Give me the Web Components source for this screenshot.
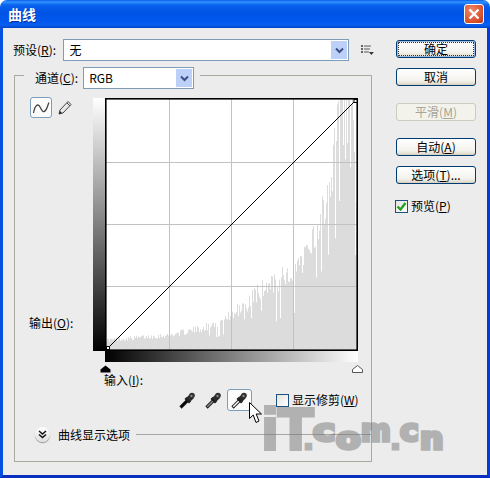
<!DOCTYPE html>
<html lang="zh">
<head>
<meta charset="utf-8">
<title>曲线</title>
<style>
    html, body { margin: 0; padding: 0; background: #fff; }
    body { font: 12px/16px "Noto Sans CJK SC", "Liberation Sans", sans-serif; color: #000; }
</style>
</head>
<body>
<curves-dialog></curves-dialog>
<script>
const FONT = '"Noto Sans CJK SC", "Liberation Sans", sans-serif';

class XpButton extends HTMLElement {
    constructor() {
        super();
        const shadow = this.attachShadow({ mode: 'open' });
        shadow.innerHTML = `
            <style>
                :host {
                    display: block;
                    box-sizing: border-box;
                    width: 80px;
                    height: 18px;
                    border: 1px solid #003c74;
                    border-radius: 3px;
                    background: linear-gradient(#fff, #f4f3ee 70%, #dcd8c8);
                    box-shadow: inset 0 -1px 0 #d6d2c2;
                    font: 12px/16px ${FONT};
                    color: #000;
                    text-align: center;
                }
                :host([default]) {
                    box-shadow: inset 0 0 0 1px #9dbbe3;
                    outline: 1px dotted #333;
                    outline-offset: -3px;
                }
                :host([disabled]) {
                    border-color: #cdcbbd;
                    background: #f3f3ec;
                    box-shadow: none;
                    color: #a5a598;
                }
            </style>
            <slot></slot>
        `;
    }
}

class XpSelect extends HTMLElement {
    constructor() {
        super();
        const shadow = this.attachShadow({ mode: 'open' });
        shadow.innerHTML = `
            <style>
                :host {
                    display: flex;
                    box-sizing: border-box;
                    height: 22px;
                    border: 1px solid #7f9db9;
                    background: #fff;
                    align-items: center;
                    justify-content: space-between;
                    padding-left: 5px;
                    padding-right: 1px;
                    font: 12px/16px ${FONT};
                }
                .arrow {
                    width: 16px;
                    height: 18px;
                    background: #bcd0f8;
                    display: flex;
                    align-items: center;
                    justify-content: center;
                }
            </style>
            <slot></slot>
            <div class="arrow">
                <svg width="9" height="7" viewBox="0 0 9 7"><path d="M1 1.500l3.500 3.500L8 1.500" fill="none" stroke="#3a5088" stroke-width="2"/></svg>
            </div>
        `;
    }
}

class XpCheck extends HTMLElement {
    constructor() {
        super();
        const shadow = this.attachShadow({ mode: 'open' });
        const tick = this.hasAttribute('checked')
            ? '<svg width="11" height="11" viewBox="0 0 11 11"><path d="M1.500 5.500l3 3 5-6.500" fill="none" stroke="#21a121" stroke-width="2.400"/></svg>'
            : '';
        shadow.innerHTML = `
            <style>
                :host {
                    display: flex;
                    align-items: center;
                    gap: 3px;
                    font: 12px/16px ${FONT};
                }
                .box {
                    box-sizing: border-box;
                    width: 13px;
                    height: 13px;
                    border: 1px solid #1c5180;
                    background: linear-gradient(135deg, #e4e3dc, #fff);
                    display: flex;
                    align-items: center;
                    justify-content: center;
                }
            </style>
            <div class="box">${tick}</div>
            <span><slot></slot></span>
        `;
    }
}

class TitleBar extends HTMLElement {
    constructor() {
        super();
        const shadow = this.attachShadow({ mode: 'open' });
        shadow.innerHTML = `
            <style>
                :host {
                    display: flex;
                    box-sizing: border-box;
                    height: 28px;
                    padding: 0 6px 0 8px;
                    align-items: center;
                    justify-content: space-between;
                    border-radius: 7px 7px 0 0;
                    background: linear-gradient(#0a5fe6 0, #2f92ff 2px, #0a62ee 5px, #0054e6 12px, #0058ee 22px, #0a5ff0 25px, #0043c8 28px);
                    color: #fff;
                    font: bold 14px/18px ${FONT};
                    text-shadow: 1px 1px 0 #0a2e9c;
                }
                .close {
                    box-sizing: border-box;
                    width: 20px;
                    height: 20px;
                    border: 1px solid #fff;
                    border-radius: 3px;
                    background: radial-gradient(circle at 35% 30%, #ec8a6c, #d9522c 65%, #b8341a);
                    display: flex;
                    align-items: center;
                    justify-content: center;
                }
            </style>
            <slot></slot>
            <div class="close">
                <svg width="12" height="12" viewBox="0 0 12 12"><path d="M1.500 1.500l9 9M10.500 1.500l-9 9" stroke="#fff" stroke-width="2.400" fill="none"/></svg>
            </div>
        `;
    }
}

class CurvesGraph extends HTMLElement {
    constructor() {
        super();
        const shadow = this.attachShadow({ mode: 'open' });
        shadow.innerHTML = `
            <style>
                :host {
                    display: grid;
                    grid-template-columns: 12px 253px;
                    grid-template-rows: 253px 11px 10px;
                }
                .output { background: linear-gradient(#fff, #000); }
                .plot { display: block; width: 253px; height: 253px; }
                .input { grid-column: 2; background: linear-gradient(90deg, #000, #fff); }
                .thumbs {
                    grid-column: 2;
                    display: flex;
                    justify-content: space-between;
                    margin: 3px -5px 0;
                }
                svg { display: block; }
            </style>
            <div class="output"></div>
            <svg class="plot" viewBox="0 0 253 253">
                <rect width="253" height="253" fill="#fff"/>
                <path id="hist" fill="#dcdcdc"/>
                <path d="M64.500 0V253M126.500 0V253M188.500 0V253M0 64.500H253M0 126.500H253M0 188.500H253" stroke="#c2c2c2" fill="none"/>
                <path d="M2 251L251 2" stroke="#000" fill="none"/>
                <rect x="0.800" y="0.800" width="251.400" height="251.400" fill="none" stroke="#000" stroke-width="1.600"/>
                <rect x="249" y="1.500" width="3" height="3" fill="#fff" stroke="#000"/>
                <rect x="1.500" y="248.500" width="3" height="3" fill="#fff" stroke="#000"/>
            </svg>
            <div class="input"></div>
            <div class="thumbs">
                <svg width="11" height="8" viewBox="0 0 11 8"><path d="M5.500 0.500L10.500 4.500V7.500H0.500V4.500Z" fill="#000"/></svg>
                <svg width="11" height="8" viewBox="0 0 11 8"><path d="M5.500 0.500L10.500 4.500V7.500H0.500V4.500Z" fill="#fff" stroke="#555"/></svg>
            </div>
        `;
        shadow.getElementById('hist').setAttribute('d', this.histogram());
    }

    histogram() {
        const env = [[0, 12], [65, 18], [95, 25], [115, 33], [142, 53], [155, 70], [168, 73], [202, 103], [212, 132], [222, 167], [227, 200], [232, 253], [247, 253], [250, 195], [252, 150]];
        let seed = 17;
        const rnd = () => (seed = (seed * 16807) % 2147483647) / 2147483647;
        let d = '';
        for (let x = 0; x < 253; x++) {
            let i = 0;
            while (i < env.length - 2 && env[i + 1][0] < x) i++;
            const [x0, y0] = env[i];
            const [x1, y1] = env[i + 1];
            const top = y0 + (y1 - y0) * (x - x0) / (x1 - x0);
            let h = top * (0.74 + rnd() * 0.3);
            if (x > 100 && rnd() < 0.1) h *= 0.5 + rnd() * 0.2;
            if (x > 232 && rnd() < 0.35) h *= 1.3;
            d += `M${x} 253V${(253 - Math.min(h, 253)).toFixed(1)}H${x + 1}V253Z`;
        }
        return d;
    }
}

class EyeDropper extends HTMLElement {
    constructor() {
        super();
        const shadow = this.attachShadow({ mode: 'open' });
        const tip = this.getAttribute('tone') || '#000';
        shadow.innerHTML = `
            <style>
                :host {
                    display: flex;
                    box-sizing: border-box;
                    align-items: center;
                    justify-content: center;
                    width: 17px;
                    height: 22px;
                }
                :host([active]) {
                    width: 25px;
                    border: 1px solid #7b9ebd;
                    border-radius: 3px;
                    background: #fbfbfb;
                }
            </style>
            <svg width="17" height="17" viewBox="0 0 17 17">
                <path d="M1.500 15.500L8.500 8.500" stroke="#1a1a1a" stroke-width="3.200" fill="none"/>
                <path d="M2.200 14.800L8.500 8.500" stroke="${tip}" stroke-width="1.500" fill="none"/>
                <path d="M6.500 6L11 10.500" stroke="#1a1a1a" stroke-width="2.800" fill="none"/>
                <path d="M9 8L13 4" stroke="#2a2a2a" stroke-width="5.400" fill="none"/>
                <circle cx="13" cy="3.500" r="2.800" fill="#333"/>
                <circle cx="12.500" cy="4" r="1.100" fill="#999"/>
            </svg>
        `;
    }
}

class CurvesDialog extends HTMLElement {
    constructor() {
        super();
        const shadow = this.attachShadow({ mode: 'open' });
        shadow.innerHTML = `
            <style>
                :host {
                    display: block;
                    position: relative;
                    width: 490px;
                    height: 478px;
                    overflow: hidden;
                    font: 12px/16px ${FONT};
                    color: #000;
                }
                u { text-underline-offset: 1px; }
                .frame {
                    box-sizing: border-box;
                    height: 450px;
                    border: solid #0550e0;
                    border-width: 0 3px 3px;
                    border-bottom-color: #0a2fc0;
                    border-right-color: #0a3bd0;
                    background: #ececec;
                    display: flex;
                    padding-left: 11px;
                }
                .left { width: 358px; padding-top: 11px; }
                .right {
                    margin-left: 24px;
                    padding-top: 12px;
                    display: flex;
                    flex-direction: column;
                }
                .preset {
                    display: flex;
                    align-items: center;
                    margin-left: -1px;
                    margin-right: -2px;
                    height: 22px;
                    margin-bottom: 14px;
                }
                .preset .label { width: 51px; }
                .preset xp-select { width: 289px; }
                .preset svg { margin-left: 12px; }
                .group {
                    box-sizing: border-box;
                    height: 387px;
                    border: 1px solid #a9a99e;
                }
                .legend {
                    display: flex;
                    align-items: center;
                    width: max-content;
                    margin: -9px 0 9px 9px;
                    padding: 0 6px 0 11px;
                    background: #ececec;
                    gap: 5px;
                }
                .legend xp-select { width: 111px; }
                .main { display: flex; }
                .tools {
                    box-sizing: border-box;
                    width: 78px;
                    height: 253px;
                    padding-left: 15px;
                    display: flex;
                    flex-direction: column;
                    justify-content: space-between;
                }
                .tool-row { display: flex; align-items: center; gap: 5px; margin-top: -1px; }
                .curve-btn {
                    box-sizing: border-box;
                    width: 22px;
                    height: 21px;
                    border: 1px solid #7b9ebd;
                    border-radius: 3px;
                    background: #fbfbfb;
                }
                .curve-btn svg { display: block; }
                .output-label { margin-left: -1px; margin-bottom: 20px; }
                .input-label { margin: 0 0 0 89px; height: 17px; }
                .droppers {
                    display: flex;
                    align-items: center;
                    margin: 0 0 0 164px;
                    height: 22px;
                }
                .droppers eye-dropper:nth-child(2) { margin-left: 9px; }
                .droppers eye-dropper:nth-child(3) { margin-left: 5px; }
                .droppers xp-check { margin-left: 24px; }
                .footer {
                    display: flex;
                    align-items: center;
                    margin: 15px 0 0 20px;
                    height: 17px;
                }
                .expand {
                    box-sizing: border-box;
                    width: 15px;
                    height: 15px;
                    border-radius: 50%;
                    background: linear-gradient(#fff, #dedede);
                    box-shadow: 0 1px 1px #8c8c8c;
                    display: flex;
                    align-items: center;
                    justify-content: center;
                }
                .footer span { margin-left: 8px; }
                .footer i { flex: 1; height: 1px; background: #a6a6a0; margin-left: 6px; }
                .right xp-button:nth-of-type(2) { margin-top: 10px; }
                .right xp-button:nth-of-type(3) { margin-top: 17px; }
                .right xp-button:nth-of-type(4) { margin-top: 17px; }
                .right xp-button:nth-of-type(5) { margin-top: 10px; }
                .right xp-check { margin-top: 14px; margin-left: -1px; }

                /* things lying over the dialog */
                .cursor { position: absolute; left: 249px; top: 402px; }
                .mark {
                    position: absolute;
                    left: 0;
                    top: 0;
                    opacity: .5;
                    color: #777;
                    pointer-events: none;
                    -webkit-text-stroke: 3.500px #777;
                }
                .mark span {
                    position: absolute;
                    line-height: 1;
                    font-family: "DejaVu Sans", sans-serif;
                    font-weight: bold;
                    font-size: 30px;
                    transform-origin: left top;
                }
                .mark span.big {
                    font-family: "Liberation Sans", sans-serif;
                    font-size: 58px;
                    line-height: .7;
                    -webkit-text-stroke: 4px #777;
                }
                .mark span.dot {
                    font-family: "Liberation Sans", sans-serif;
                    font-size: 32px;
                    -webkit-text-stroke: 3px #777;
                }
            </style>
            <title-bar>曲线</title-bar>
            <div class="frame">
                <div class="left">
                    <div class="preset">
                        <span class="label">预设(<u>R</u>):</span>
                        <xp-select>无</xp-select>
                        <svg width="13" height="10" viewBox="0 0 13 10">
                            <path d="M0 1h2M0 4h2M0 7h2" stroke="#333" stroke-width="1.600"/>
                            <path d="M3 1h7M3 4h6M3 7h5" stroke="#555"/>
                            <path d="M8 7h5l-2.500 3z" fill="#333"/>
                        </svg>
                    </div>
                    <div class="group">
                        <div class="legend">
                            <span>通道(<u>C</u>):</span>
                            <xp-select>RGB</xp-select>
                        </div>
                        <div class="main">
                            <div class="tools">
                                <div class="tool-row">
                                    <div class="curve-btn">
                                        <svg width="20" height="19" viewBox="0 0 20 19"><path d="M2.500 15C4 7 7 5 9 9s3.500 6 5.500 3.500S17 6 18 4.500" fill="none" stroke="#444" stroke-width="1.300"/></svg>
                                    </div>
                                    <svg width="17" height="17" viewBox="0 0 17 17">
                                        <path d="M2 15l1-4 8-8.500 3 3L6 14z" fill="#e8e8e8" stroke="#444"/>
                                        <path d="M10 4l3 3" stroke="#444"/>
                                        <path d="M2 15l1-3 2 2z" fill="#222"/>
                                    </svg>
                                </div>
                                <div class="output-label">输出(<u>O</u>):</div>
                            </div>
                            <curves-graph></curves-graph>
                        </div>
                        <div class="input-label">输入(<u>I</u>):</div>
                        <div class="droppers">
                            <eye-dropper tone="#000"></eye-dropper>
                            <eye-dropper tone="#8a8a8a"></eye-dropper>
                            <eye-dropper tone="#fff" active></eye-dropper>
                            <xp-check>显示修剪(<u>W</u>)</xp-check>
                        </div>
                        <div class="footer">
                            <div class="expand">
                                <svg width="9" height="9" viewBox="0 0 9 9"><path d="M1 1l3.500 3L8 1M1 4.500l3.500 3 3.500-3" fill="none" stroke="#111" stroke-width="1.500"/></svg>
                            </div>
                            <span>曲线显示选项</span>
                            <i></i>
                        </div>
                    </div>
                </div>
                <div class="right">
                    <xp-button default>确定</xp-button>
                    <xp-button>取消</xp-button>
                    <xp-button disabled>平滑(<u>M</u>)</xp-button>
                    <xp-button>自动(<u>A</u>)</xp-button>
                    <xp-button>选项(<u>T</u>)...</xp-button>
                    <xp-check checked>预览(<u>P</u>)</xp-check>
                </div>
            </div>
            <svg class="cursor" width="13" height="22" viewBox="0 0 13 22">
                <path d="M0.500 0.500V16.500L4.200 13L7 20.500L10 19L7.200 12H12.500Z" fill="#fff" stroke="#000"/>
            </svg>
            <div class="mark">
                <span class="big" style="left:262px;top:409px">i</span>
                <span class="big" style="left:278px;top:409px;letter-spacing:-9px">T</span>
                <span class="dot" style="left:304px;top:422px">.</span>
                <span style="left:313px;top:416px;transform:scaleX(1.25)">c</span>
                <span style="left:336px;top:424px;transform:scaleX(1.2)">o</span>
                <span style="left:361px;top:416px;transform:scaleX(.95)">m</span>
                <span class="dot" style="left:391px;top:422px">.</span>
                <span style="left:400px;top:416px;transform:scaleX(1.05)">c</span>
                <span style="left:420px;top:424px;transform:scaleX(1.1)">n</span>
            </div>
        `;
    }
}

customElements.define('xp-button', XpButton);
customElements.define('xp-select', XpSelect);
customElements.define('xp-check', XpCheck);
customElements.define('title-bar', TitleBar);
customElements.define('curves-graph', CurvesGraph);
customElements.define('eye-dropper', EyeDropper);
customElements.define('curves-dialog', CurvesDialog);
</script>
</body>
</html>
